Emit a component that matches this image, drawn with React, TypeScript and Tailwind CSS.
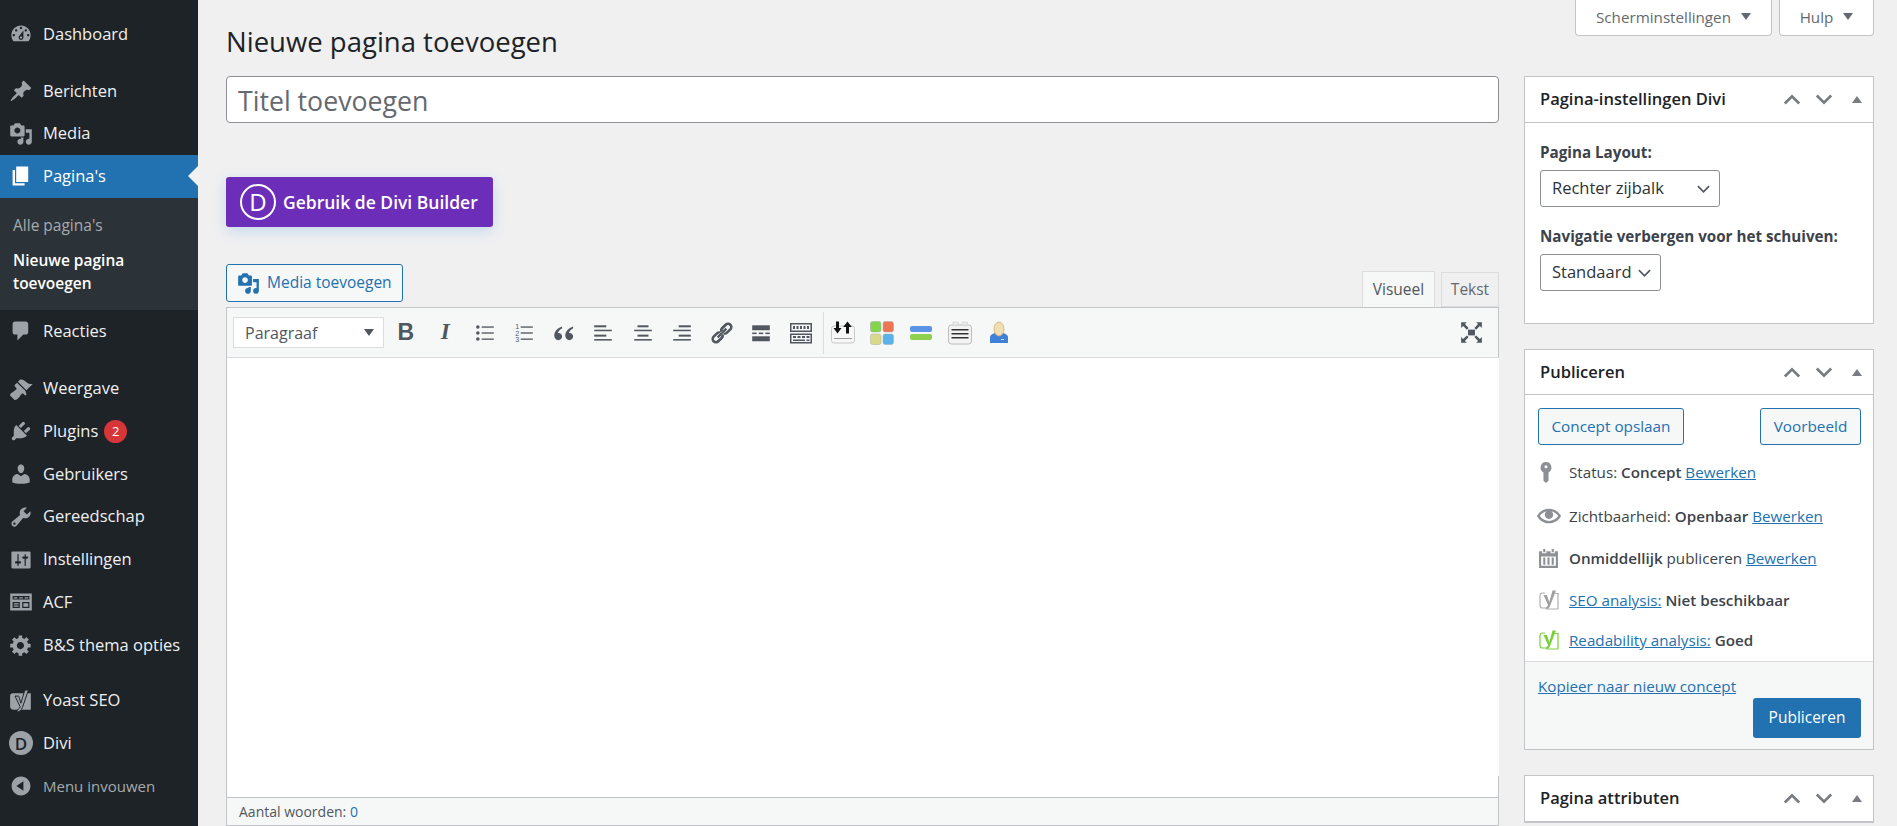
import type { ReactNode } from 'react';

const FONT = { fontFamily: '"Open Sans", "Noto Sans", sans-serif' };

const paths: Record<string, string> = {
  dashboard: 'M3.76 16h12.48c1.1-1.37 1.76-3.11 1.76-5 0-4.42-3.58-8-8-8s-8 3.58-8 8c0 1.89.66 3.63 1.76 5zM10 4c.55 0 1 .45 1 1s-.45 1-1 1-1-.45-1-1 .45-1 1-1zM6 6c.55 0 1 .45 1 1s-.45 1-1 1-1-.45-1-1 .45-1 1-1zm8 0c.55 0 1 .45 1 1s-.45 1-1 1-1-.45-1-1 .45-1 1-1zm-5.37 5.55L12 7v6c0 1.1-.9 2-2 2s-2-.9-2-2c0-.57.24-1.08.63-1.45zM4 10c.55 0 1 .45 1 1s-.45 1-1 1-1-.45-1-1 .45-1 1-1zm12 0c.55 0 1 .45 1 1s-.45 1-1 1-1-.45-1-1 .45-1 1-1zm-5 3c0-.55-.45-1-1-1s-1 .45-1 1 .45 1 1 1 1-.45 1-1z',
  pin: 'M10.44 3.02l1.82-1.82 6.36 6.35-1.83 1.82c-1.05-.68-2.48-.57-3.41.36l-.75.75c-.92.93-1.04 2.35-.35 3.41l-1.83 1.82-2.41-2.41-2.8 2.79c-.42.42-3.38 2.71-3.8 2.29s1.86-3.39 2.28-3.81l2.79-2.79L4.1 9.36l1.83-1.82c1.05.69 2.48.57 3.4-.36l.75-.75c.93-.92 1.05-2.35.36-3.41z',
  media: 'M13 11V4c0-.55-.45-1-1-1h-1.67L9 1H5L3.67 3H2c-.55 0-1 .45-1 1v7c0 .55.45 1 1 1h10c.55 0 1-.45 1-1zM7 4.5c1.38 0 2.5 1.12 2.5 2.5S8.38 9.5 7 9.5 4.5 8.38 4.5 7 5.62 4.5 7 4.5zM14 6h5v10.5c0 1.38-1.12 2.5-2.5 2.5S14 17.88 14 16.5s1.12-2.5 2.5-2.5c.17 0 .34.02.5.05V9h-3V6zm-4 8.05V13h2v3.5c0 1.38-1.12 2.5-2.5 2.5S7 17.88 7 16.5 8.12 14 9.5 14c.17 0 .34.02.5.05z',
  page: 'M6 15V2h10v13H6zm-1 1h8v2H3V5h2v11z',
  comments: 'M5 2h9c1.1 0 2 .9 2 2v7c0 1.1-.9 2-2 2h-2l-5 5v-5H5c-1.1 0-2-.9-2-2V4c0-1.1.9-2 2-2z',
  brush: 'M14.48 11.06L7.41 3.99l1.5-1.5c.5-.56 2.3-.47 3.51.32 1.21.8 1.43 1.28 2.91 2.1 1.18.64 2.45 1.26 4.45.85zm-.71.71L6.7 4.7 4.93 6.47c-.39.39-.39 1.02 0 1.41l1.06 1.06c.39.39.39 1.03 0 1.42-.6.6-1.43 1.11-2.21 1.69-.35.26-.7.53-1.01.84C1.43 13.23.4 14.91 1.08 15.6l3.3 3.3c.68.68 2.37-.35 3.71-1.7.31-.31.58-.66.84-1.01.58-.78 1.09-1.61 1.69-2.21.39-.39 1.02-.39 1.41 0l1.06 1.06c.39.39 1.02.39 1.41 0z',
  plugin: 'M13.11 4.36L9.87 7.6 8 5.73l3.24-3.24c.35-.34 1.05-.2 1.56.32.52.51.66 1.21.31 1.55zm-8 1.77l.91-1.12 9.01 9.01-1.19.84c-.71.71-2.63 1.16-3.82 1.16H6.14L4.9 17.26c-.59.59-1.54.59-2.12 0-.59-.58-.59-1.53 0-2.12l1.24-1.24v-3.88c0-1.13.4-3.19 1.09-3.89zm7.26 3.97l3.24-3.24c.34-.35 1.04-.21 1.55.31.52.51.66 1.21.31 1.55l-3.24 3.25z',
  users: 'M10 9.25c-2.27 0-2.73-3.44-2.73-3.44C7 4.02 7.82 2 9.97 2c2.16 0 2.98 2.02 2.71 3.81 0 0-.41 3.44-2.68 3.44zm0 2.57L12.72 10c2.39 0 4.52 2.33 4.52 4.53v2.49s-3.65 1.13-7.24 1.13c-3.65 0-7.24-1.13-7.24-1.13v-2.49c0-2.25 1.94-4.48 4.47-4.48z',
  tools: 'M16.68 9.77c-1.34 1.34-3.3 1.67-4.95.99l-5.41 6.52c-.99.99-2.59.99-3.58 0s-.99-2.59 0-3.57l6.52-5.42c-.68-1.65-.35-3.61.99-4.95 1.28-1.28 3.12-1.62 4.72-1.06l-2.89 2.89 2.82 2.82 2.86-2.87c.53 1.58.18 3.39-1.08 4.65zM3.81 16.21c.4.39 1.04.39 1.43 0 .4-.4.4-1.04 0-1.43-.39-.4-1.03-.4-1.43 0-.39.39-.39 1.03 0 1.43z',
  settings: 'M18 16V4c0-.55-.45-1-1-1H3c-.55 0-1 .45-1 1v12c0 .55.45 1 1 1h14c.55 0 1-.45 1-1zM8 11h1c.55 0 1 .45 1 1s-.45 1-1 1H8v1.5c0 .28-.22.5-.5.5s-.5-.22-.5-.5V13H6c-.55 0-1-.45-1-1s.45-1 1-1h1V5.5c0-.28.22-.5.5-.5s.5.22.5.5V11zm5-2h-1c-.55 0-1-.45-1-1s.45-1 1-1h1V5.5c0-.28.22-.5.5-.5s.5.22.5.5V7h1c.55 0 1 .45 1 1s-.45 1-1 1h-1v5.5c0 .28-.22.5-.5.5s-.5-.22-.5-.5V9z',
  acf: 'M1 3h18v14H1V3zm2 2v3h14V5H3zm0 5v5h6v-5H3zm8 0v5h6v-5h-6zM4 6h3v1H4V6zm4.5 0h3v1h-3V6zM13 6h3v1h-3V6zM4 11h4v1H4v-1zm0 2h4v1H4v-1zm8-2h4v3h-4v-3z',
  gear: 'M18 12h-2.18c-.17.7-.44 1.35-.81 1.93l1.54 1.54-2.1 2.1-1.54-1.54c-.58.36-1.23.63-1.91.79V19H8v-2.18c-.68-.16-1.33-.43-1.91-.79l-1.54 1.54-2.12-2.12 1.54-1.54c-.36-.58-.63-1.23-.79-1.91H1V9.03h2.17c.16-.7.44-1.35.8-1.94L2.43 5.55l2.1-2.1 1.54 1.54c.58-.37 1.24-.64 1.93-.81V2h3v2.18c.68.16 1.33.43 1.91.79l1.54-1.54 2.12 2.12-1.54 1.54c.36.59.64 1.24.8 1.94H18V12zm-8.5 1.5c1.66 0 3-1.34 3-3s-1.34-3-3-3-3 1.34-3 3 1.34 3 3 3z',
  collapse: 'M10 2.16c4.33 0 7.84 3.51 7.84 7.84s-3.51 7.84-7.84 7.84S2.16 14.33 2.16 10 5.71 2.16 10 2.16zm2 11.72V6.12L6.18 9.97z',
  eye: 'M19.7 9.4C17.7 6 14 3.9 10 3.9S2.3 6 .3 9.4L0 10l.3.6c2 3.4 5.7 5.5 9.7 5.5s7.7-2.1 9.7-5.5l.3-.6-.3-.6zM10 14.1c-3.1 0-6-1.6-7.7-4.1C3.6 8 5.7 6.6 8 6.1c-.9.6-1.5 1.7-1.5 2.9 0 1.9 1.6 3.5 3.5 3.5s3.5-1.6 3.5-3.5c0-1.2-.6-2.3-1.5-2.9 2.3.5 4.4 1.9 5.7 3.9-1.7 2.5-4.6 4.1-7.7 4.1z',
  key: 'M10 1a5 5 0 0 1 2.300 9.400V18L10 20l-2.300-2V10.400A5 5 0 0 1 10 1zm0 2.800a1.400 1.400 0 1 0 0 2.800 1.400 1.400 0 0 0 0-2.800z',
  calendar: 'M5 1h2v3H5V1zm8 0h2v3h-2V1zM1 3h3v2h4V3h4v2h4V3h3v16H1V3zm2 5v9h14V8H3zm2 1h2v7H5V9zm4 0h2v7H9V9zm4 0h2v7h-2V9z',
  quote: 'M8.5 5C5 6.2 2.5 8.8 2.5 12c0 2 1.300 3.500 3.100 3.500 1.600 0 2.900-1.200 2.900-2.800S7.300 10 5.900 10c-.3 0-.5 0-.6.1.3-1.500 1.600-2.800 3.200-3.500zm8.500 0c-3.500 1.200-6 3.800-6 7 0 2 1.300 3.500 3.100 3.500 1.600 0 2.900-1.200 2.900-2.800s-1.200-2.700-2.600-2.700c-.3 0-.5 0-.6.1.3-1.500 1.600-2.800 3.200-3.500z',
  link: 'M17.700 2.300a3.800 3.800 0 0 0-5.400 0L9.500 5.100a3.800 3.800 0 0 0-.5 4.800l1.600-1.600a1.600 1.600 0 0 1 .5-1.600l2.800-2.800a1.600 1.600 0 0 1 2.300 2.300l-2.800 2.800a1.600 1.600 0 0 1-1.100.5l-1.600 1.600a3.800 3.800 0 0 0 4.200-.6l2.800-2.800a3.800 3.800 0 0 0 0-5.400zM2.300 17.700a3.800 3.800 0 0 0 5.400 0l2.800-2.800a3.800 3.800 0 0 0 .5-4.800l-1.600 1.600a1.600 1.600 0 0 1-.5 1.600l-2.800 2.800a1.600 1.600 0 0 1-2.300-2.300l2.800-2.800a1.600 1.600 0 0 1 1.100-.5l1.600-1.600a3.800 3.800 0 0 0-4.200.6l-2.800 2.800a3.800 3.800 0 0 0 0 5.400zM13 5.700l1.300 1.300-7.300 7.300L5.700 13z',
};

function Dash({ name, className }: { name: string; className: string }) {
  return (
    <svg viewBox="0 0 20 20" className={className} fill="currentColor" fillRule="evenodd">
      <path d={paths[name]} />
    </svg>
  );
}

function YoastMenu() {
  return (
    <svg viewBox="0 0 22 22" className="h-[24px] w-[24px]">
      <path d="M3.500 4H20v15H4c-1.700 0-3-1.300-3-3V6.500C1 5 2 4 3.500 4z" fill="#9ca2a7" />
      <path d="M5.500 6.500h3.400l2 6.500L14.500 1h3.300L12.300 17c-.8 2.400-2.200 3.700-4.800 4.300v-2.200c1.500-.4 2.300-1.300 2.700-2.900z" fill="#9ca2a7" stroke="#1d2327" strokeWidth=".9" />
    </svg>
  );
}

type NavItem = { label: string; icon?: string; mt?: string; badge?: string; current?: boolean };

const navTop: NavItem[] = [
  { label: 'Dashboard', icon: 'dashboard', mt: 'mt-[13px]' },
  { label: 'Berichten', icon: 'pin', mt: 'mt-[14px]' },
  { label: 'Media', icon: 'media' },
  { label: "Pagina's", icon: 'page', current: true },
];

const navBottom: NavItem[] = [
  { label: 'Reacties', icon: 'comments' },
  { label: 'Weergave', icon: 'brush', mt: 'mt-[15px]' },
  { label: 'Plugins', icon: 'plugin', badge: '2' },
  { label: 'Gebruikers', icon: 'users' },
  { label: 'Gereedschap', icon: 'tools' },
  { label: 'Instellingen', icon: 'settings' },
  { label: 'ACF', icon: 'acf' },
  { label: 'B&S thema opties', icon: 'gear' },
];

function NavRow({ item }: { item: NavItem }) {
  return (
    <div
      className={`relative flex h-[42.7px] items-center pl-[9px] text-[16.5px] text-[#f0f0f1] ${item.mt ?? ''} ${
        item.current ? 'bg-[#2271b1] text-white' : ''
      }`}
    >
      <Dash name={item.icon ?? 'page'} className={`h-[24px] w-[24px] ${item.current ? 'text-white' : 'text-[#9ca2a7]'}`} />
      <span className="ml-[10px] whitespace-nowrap">{item.label}</span>
      {item.badge && (
        <span className="ml-[6px] flex h-[23px] w-[23px] items-center justify-center rounded-full bg-[#d63638] text-[13px] text-white">
          {item.badge}
        </span>
      )}
      {item.current && (
        <span className="absolute right-0 top-1/2 -mt-[10px] h-0 w-0 border-y-[10px] border-r-[10px] border-y-transparent border-r-[#f0f0f1]" />
      )}
    </div>
  );
}

function Sidebar() {
  return (
    <aside className="w-[198px] shrink-0 bg-[#1d2327]">
      {navTop.map(n => (
        <NavRow key={n.label} item={n} />
      ))}
      <div className="h-[112px] bg-[#2c3338] pl-[13px] pt-[16px] text-[15.5px]">
        <div className="leading-[23px] text-[#a7aaad]">Alle pagina's</div>
        <div className="mt-[12px] font-semibold leading-[23px] text-white">
          Nieuwe pagina
          <br />
          toevoegen
        </div>
      </div>
      {navBottom.map(n => (
        <NavRow key={n.label} item={n} />
      ))}
      <div className="mt-[13px] flex h-[42.7px] items-center pl-[9px] text-[16.5px] text-[#f0f0f1]">
        <YoastMenu />
        <span className="ml-[10px]">Yoast SEO</span>
      </div>
      <div className="flex h-[42.7px] items-center pl-[9px] text-[16.5px] text-[#f0f0f1]">
        <span className="flex h-[24px] w-[24px] items-center justify-center rounded-full bg-[#9ca2a7] text-[17px] font-semibold text-[#1d2327]">
          D
        </span>
        <span className="ml-[10px]">Divi</span>
      </div>
      <div className="flex h-[42.7px] items-center pl-[9px] text-[15px] text-[#a7aaad]">
        <Dash name="collapse" className="h-[24px] w-[24px] text-[#9ca2a7]" />
        <span className="ml-[10px]">Menu invouwen</span>
      </div>
    </aside>
  );
}

function ScreenTab({ label, className }: { label: string; className: string }) {
  return (
    <div className={`flex h-[36px] items-center justify-center gap-[10px] rounded-b-[4px] border border-t-0 border-[#c3c4c7] bg-white text-[15.2px] text-[#646970] ${className}`}>
      {label}
      <span className="mt-[-2px] h-0 w-0 border-x-[5px] border-t-[7px] border-x-transparent border-t-[#646970]" />
    </div>
  );
}

function Lines({ rows }: { rows: [number, number, number][] }) {
  return (
    <svg viewBox="0 0 20 20" className="h-[22px] w-[22px]" fill="#50575e">
      {rows.map((r, i) => (
        <rect key={i} x={r[0]} y={r[1]} width={r[2]} height={i % 2 ? 1.4 : 1.8} />
      ))}
    </svg>
  );
}

function ToolBtn({ children }: { children: ReactNode }) {
  return <div className="flex h-[31px] w-[39.5px] shrink-0 items-center justify-center text-[#50575e]">{children}</div>;
}

function PluginIcon({ children }: { children: ReactNode }) {
  return (
    <div className="flex h-[31px] w-[39px] shrink-0 items-center justify-center">
      <svg viewBox="0 0 26 26" className="h-[26px] w-[26px]">
        {children}
      </svg>
    </div>
  );
}

function Toolbar() {
  return (
    <div className="flex h-[50px] items-center border-b border-r border-[#dcdcde] border-r-[#c3c4c7] bg-[#f6f7f7] pl-[6px]">
      <div className="mr-[2px] flex h-[31px] w-[151px] shrink-0 items-center justify-between border border-[#dcdcde] bg-white pl-[11px] pr-[9px] text-[16px] text-[#50575e]">
        Paragraaf
        <span className="h-0 w-0 border-x-[5px] border-t-[7px] border-x-transparent border-t-[#50575e]" />
      </div>
      <ToolBtn>
        <span className="text-[23px] font-bold" style={{ fontFamily: '"Liberation Sans", sans-serif' }}>B</span>
      </ToolBtn>
      <ToolBtn>
        <span className="text-[23px] font-bold italic" style={{ fontFamily: '"Liberation Serif", serif' }}>I</span>
      </ToolBtn>
      <ToolBtn>
        <svg viewBox="0 0 20 20" className="h-[22px] w-[22px]" fill="#50575e">
          <circle cx="3.500" cy="4.500" r="1.600" />
          <circle cx="3.500" cy="10" r="1.600" />
          <circle cx="3.500" cy="15.500" r="1.600" />
          <rect x="7" y="4" width="11" height="1.200" />
          <rect x="7" y="9.400" width="11" height="1.200" />
          <rect x="7" y="15" width="11" height="1.200" />
        </svg>
      </ToolBtn>
      <ToolBtn>
        <svg viewBox="0 0 20 20" className="h-[22px] w-[22px]" fill="#50575e">
          <text x="2" y="6.500" fontSize="6.500" fontFamily="Liberation Sans, sans-serif">1</text>
          <text x="2" y="12.500" fontSize="6.500" fontFamily="Liberation Sans, sans-serif">2</text>
          <text x="2" y="18.500" fontSize="6.500" fontFamily="Liberation Sans, sans-serif">3</text>
          <rect x="7" y="4" width="11" height="1.200" />
          <rect x="7" y="9.400" width="11" height="1.200" />
          <rect x="7" y="15" width="11" height="1.200" />
        </svg>
      </ToolBtn>
      <ToolBtn><Dash name="quote" className="h-[26px] w-[26px]" /></ToolBtn>
      <ToolBtn><Lines rows={[[2, 3, 11], [2, 7, 16], [2, 11.500, 11], [2, 15.500, 16]]} /></ToolBtn>
      <ToolBtn><Lines rows={[[5, 3, 10], [2, 7, 16], [5, 11.500, 10], [2, 15.500, 16]]} /></ToolBtn>
      <ToolBtn><Lines rows={[[7, 3, 11], [2, 7, 16], [7, 11.500, 11], [2, 15.500, 16]]} /></ToolBtn>
      <ToolBtn><Dash name="link" className="h-[24px] w-[24px]" /></ToolBtn>
      <ToolBtn>
        <svg viewBox="0 0 20 20" className="h-[22px] w-[22px]" fill="#50575e">
          <rect x="2" y="3" width="16" height="4.500" />
          <rect x="2" y="13" width="16" height="4.500" />
          <rect x="2" y="9.600" width="4" height="1.400" />
          <rect x="8" y="9.600" width="4" height="1.400" />
          <rect x="14" y="9.600" width="4" height="1.400" />
        </svg>
      </ToolBtn>
      <ToolBtn>
        <svg viewBox="0 0 24 24" className="h-[24px] w-[24px]" fill="#50575e" fillRule="evenodd">
          <path d="M1 2h22v9H1V2zm1.500 1.500v6h19v-6h-19zM1 12.500h22v10H1v-10zm1.500 1.500v7h19v-7h-19z" />
          <path d="M4 5h2v3H4zM7.500 5h2v3h-2zM11 5h2v3h-2zM14.500 5h2v3h-2zM18 5h2v3h-2zM4 15h3v2H4zM8.500 15h3v2h-3zM13 15h3v2h-3zM17.500 15h3v2h-3zM4 18.500h12v1.500H4zM17.500 18.500h3v1.500h-3z" />
        </svg>
      </ToolBtn>
      <div className="ml-[2px] h-[42px] w-px shrink-0 bg-[#dcdcde]" />
      <PluginIcon>
        <rect x="1.500" y="6" width="23" height="17" rx="2.500" fill="#f7f7f7" stroke="#c8c8c8" />
        <rect x="4" y="18" width="18" height="1" fill="#9a9a9a" />
        <path d="M6 1.500h3v6.500h2.500L7.500 13.500 3.500 8H6zM17.500 1.500L21.800 7H19v6.500h-3V7h-2.800z" fill="#111" />
      </PluginIcon>
      <PluginIcon>
        <rect x="1.500" y="1.500" width="10.500" height="10.500" rx="2" fill="#86d34c" stroke="#a8a8a8" strokeWidth=".5" />
        <rect x="14" y="1.500" width="10.500" height="10.500" rx="2" fill="#ee7453" stroke="#a8a8a8" strokeWidth=".5" />
        <rect x="1.500" y="14" width="10.500" height="10.500" rx="2" fill="#d9d98a" stroke="#a8a8a8" strokeWidth=".5" />
        <rect x="14" y="14" width="10.500" height="10.500" rx="2" fill="#58b3ea" stroke="#a8a8a8" strokeWidth=".5" />
      </PluginIcon>
      <PluginIcon>
        <rect x="2" y="6" width="22" height="6" rx="2" fill="#5b93e6" />
        <rect x="2" y="14" width="22" height="6" rx="2" fill="#8fd14f" />
      </PluginIcon>
      <PluginIcon>
        <rect x="1.500" y="5" width="23" height="19" rx="3" fill="#f3f3f3" stroke="#bcbcbc" />
        <rect x="6" y="2" width="5.500" height="3.500" fill="#e8e8e8" stroke="#cccccc" strokeWidth=".5" />
        <rect x="15" y="2" width="5.500" height="3.500" fill="#e8e8e8" stroke="#cccccc" strokeWidth=".5" />
        <rect x="4.500" y="9" width="17" height="1.500" fill="#333" />
        <rect x="4.500" y="13" width="17" height="1.500" fill="#333" />
        <rect x="4.500" y="17" width="17" height="1.500" fill="#333" />
      </PluginIcon>
      <PluginIcon>
        <path d="M4 23v-6c0-2 2-3 5-4h8c3 1 5 2 5 4v6z" fill="#3f80d8" />
        <ellipse cx="13" cy="9" rx="5" ry="7" fill="#f0ddb0" stroke="#c8a868" strokeWidth=".7" />
        <rect x="15" y="19" width="3" height="1" fill="#cfe0f7" />
      </PluginIcon>
      <div className="ml-auto mr-[7px] flex h-[31px] w-[39px] items-center justify-center">
        <svg viewBox="0 0 20 20" className="h-[23px] w-[23px]" fill="#50575e">
          <rect x="7" y="7.500" width="6" height="5" />
          <path d="M1 1h5L4.300 2.700 7.500 6 6 7.500 2.700 4.300 1 6zM19 1v5l-1.700-1.700L14 7.500 12.500 6l3.200-3.300L14 1zM1 19v-5l1.700 1.700L6 12.500 7.500 14l-3.200 3.300L6 19zM19 19h-5l1.700-1.700L12.500 14l1.500-1.500 3.300 3.200L19 14z" />
        </svg>
      </div>
    </div>
  );
}

function Chevrons() {
  return (
    <div className="flex items-center text-[#787c82]">
      <svg viewBox="0 0 20 12" className="mr-[14px] h-[11px] w-[18px]" fill="none" stroke="currentColor" strokeWidth="3">
        <path d="M2 10.500l8-8 8 8" />
      </svg>
      <svg viewBox="0 0 20 12" className="mr-[19px] h-[11px] w-[18px]" fill="none" stroke="currentColor" strokeWidth="3">
        <path d="M2 1.500l8 8 8-8" />
      </svg>
      <span className="mr-[11px] h-0 w-0 border-x-[5px] border-b-[7px] border-x-transparent border-b-current" />
    </div>
  );
}

function BoxHeader({ title, className }: { title: string; className: string }) {
  return (
    <div className={`flex items-center justify-between border-b border-[#c3c4c7] pl-[15px] ${className}`}>
      <h2 className="text-[16.5px] font-semibold text-[#1d2327]">{title}</h2>
      <Chevrons />
    </div>
  );
}

function FakeSelect({ label, className }: { label: string; className: string }) {
  return (
    <div className={`mt-[7px] flex h-[37px] items-center justify-between rounded-[3px] border border-[#8c8f94] pl-[11px] pr-[9px] text-[16.5px] text-[#2c3338] ${className}`}>
      {label}
      <svg viewBox="0 0 14 8" className="h-[8px] w-[13px]" fill="none" stroke="#50575e" strokeWidth="1.800">
        <path d="M1 1l6 6 6-6" />
      </svg>
    </div>
  );
}

function OutlineBtn({ label, className }: { label: string; className: string }) {
  return (
    <div className={`flex h-[37px] items-center justify-center rounded-[3px] border border-[#2271b1] bg-[#f6f7f7] text-[15.3px] text-[#2271b1] ${className}`}>
      {label}
    </div>
  );
}

function MiscRow({ icon, children, className }: { icon: ReactNode; children: ReactNode; className: string }) {
  return (
    <div className={`flex items-center text-[15.2px] text-[#3c434a] ${className}`}>
      <div className="flex w-[31px] shrink-0 items-center justify-start">{icon}</div>
      <div className="whitespace-nowrap">{children}</div>
    </div>
  );
}

function A({ children }: { children: ReactNode }) {
  return <span className="text-[#2271b1] underline">{children}</span>;
}

function YoastBox({ color, fill }: { color: string; fill: string }) {
  return (
    <svg viewBox="0 0 22 22" className="h-[22px] w-[22px]" fill="none">
      <path d="M7 4H4.500C3 4 2 5 2 6.500v10C2 18 3 19 4.500 19H7" stroke={color} strokeWidth="1.200" />
      <path d="M17 4.500H20V20H9" stroke={color} strokeWidth="1.200" />
      <path d="M5.500 6h3.400l2.400 7L14.500 1.500h3.500L12 17c-.8 2-2 3-4.500 3.500v-2.300c1.500-.3 2.300-1.100 2.500-2.200z" fill={fill} />
    </svg>
  );
}

function PublishBox() {
  return (
    <div className="mt-[25px] border border-[#c3c4c7] bg-white">
      <BoxHeader title="Publiceren" className="h-[45px]" />
      <div className="pl-[13px] pr-[12px] pt-[13px]">
        <div className="flex justify-between">
          <OutlineBtn label="Concept opslaan" className="w-[146px]" />
          <OutlineBtn label="Voorbeeld" className="w-[101px]" />
        </div>
        <MiscRow className="mt-[13px] h-[28px]" icon={<Dash name="key" className="ml-[-3px] h-[22px] w-[22px] text-[#8c8f94]" />}>
          Status: <b className="font-semibold">Concept</b> <A>Bewerken</A>
        </MiscRow>
        <MiscRow className="mt-[16px] h-[28px]" icon={<Dash name="eye" className="ml-[-1px] h-[24px] w-[24px] text-[#8c8f94]" />}>
          Zichtbaarheid: <b className="font-semibold">Openbaar</b> <A>Bewerken</A>
        </MiscRow>
        <MiscRow className="mt-[14px] h-[28px]" icon={<Dash name="calendar" className="h-[21px] w-[21px] text-[#8c8f94]" />}>
          <b className="font-semibold">Onmiddellijk</b> publiceren <A>Bewerken</A>
        </MiscRow>
        <MiscRow className="mt-[14px] h-[28px]" icon={<YoastBox color="#b0b0b0" fill="#a0a0a0" />}>
          <A>SEO analysis:</A> <b className="font-semibold">Niet beschikbaar</b>
        </MiscRow>
        <MiscRow className="mt-[12px] h-[28px]" icon={<YoastBox color="#7ad03a" fill="#7ad03a" />}>
          <A>Readability analysis:</A> <b className="font-semibold">Goed</b>
        </MiscRow>
      </div>
      <div className="mt-[7px] h-[88px] border-t border-[#dcdcde] bg-[#f6f7f7] pl-[13px] pr-[12px] pt-[13px]">
        <div className="text-[15.2px] leading-[23px]"><A>Kopieer naar nieuw concept</A></div>
        <div className="flex justify-end">
          <div className="flex h-[40px] w-[108px] items-center justify-center rounded-[3px] bg-[#2271b1] text-[15.5px] text-white">
            Publiceren
          </div>
        </div>
      </div>
    </div>
  );
}

export default function App() {
  return (
    <div className="flex h-[826px] overflow-hidden bg-[#f0f0f1]" style={FONT}>
      <Sidebar />
      <main className="min-w-0 flex-1 pl-[28px] pr-[23px]">
        <div className="flex h-[76px] items-start justify-between">
          <h1 className="pt-[20px] text-[27.5px] leading-[44px] text-[#1d2327]">Nieuwe pagina toevoegen</h1>
          <div className="flex gap-[7px]">
            <ScreenTab label="Scherminstellingen" className="w-[197px]" />
            <ScreenTab label="Hulp" className="w-[95px]" />
          </div>
        </div>
        <div className="flex gap-[25px]">
          <div className="min-w-0 flex-1">
            <div className="flex h-[47px] items-center rounded-[4px] border border-[#8c8f94] bg-white pl-[11px] pt-[3px] text-[26.7px] text-[#646970]">
              Titel toevoegen
            </div>
            <div className="mt-[54px] flex h-[50px] w-[267px] items-center rounded-[3px] bg-[#6c2eb9] pl-[14px] text-[17.5px] font-semibold text-white shadow-[0_4px_14px_rgba(43,135,218,0.22)]">
              <span className="flex h-[36px] w-[36px] items-center justify-center rounded-full border-2 border-white text-[24px] font-normal">
                D
              </span>
              <span className="ml-[7px] whitespace-nowrap">Gebruik de Divi Builder</span>
            </div>
            <div className="mt-[37px] flex h-[43px] items-start justify-between">
              <div className="flex h-[38px] w-[177px] items-center rounded-[3px] border border-[#2271b1] bg-[#f6f7f7] pl-[10px] text-[15.5px] text-[#2271b1]">
                <Dash name="media" className="h-[23px] w-[23px]" />
                <span className="ml-[7px]">Media toevoegen</span>
              </div>
              <div className="mt-[8px] flex h-[35px] items-end gap-[6px] text-[15.5px]">
                <div className="flex h-[36px] w-[73px] items-center justify-center border border-b-0 border-[#dcdcde] bg-[#f6f7f7] text-[#50575e]">Visueel</div>
                <div className="flex h-[35px] w-[58px] items-center justify-center border border-[#dcdcde] bg-[#f0f0f1] text-[#646970]">Tekst</div>
              </div>
            </div>
            <div className="border-l border-t border-[#c3c4c7]">
              <Toolbar />
              <div className="relative h-[440px] border-b border-[#c3c4c7] bg-white">
                <div className="absolute bottom-0 right-0 h-[21px] w-px bg-[#c3c4c7]" />
              </div>
              <div className="flex h-[28px] items-center border-b border-r border-[#c3c4c7] bg-[#f6f7f7] pl-[12px] text-[14px] text-[#50575e]">
                Aantal woorden:&nbsp;<span className="text-[#2271b1]">0</span>
              </div>
            </div>
          </div>
          <div className="w-[350px] shrink-0">
            <div className="h-[248px] border border-[#c3c4c7] bg-white">
              <BoxHeader title="Pagina-instellingen Divi" className="h-[46px]" />
              <div className="px-[15px] pt-[18px] text-[15.2px] text-[#3c434a]">
                <div className="font-bold leading-[22px]">Pagina Layout:</div>
                <FakeSelect label="Rechter zijbalk" className="w-[180px]" />
                <div className="mt-[18px] font-bold leading-[22px]">Navigatie verbergen voor het schuiven:</div>
                <FakeSelect label="Standaard" className="w-[121px]" />
              </div>
            </div>
            <PublishBox />
            <div className="mt-[25px] border border-[#c3c4c7] bg-white">
              <BoxHeader title="Pagina attributen" className="h-[46px]" />
            </div>
          </div>
        </div>
      </main>
    </div>
  );
}
